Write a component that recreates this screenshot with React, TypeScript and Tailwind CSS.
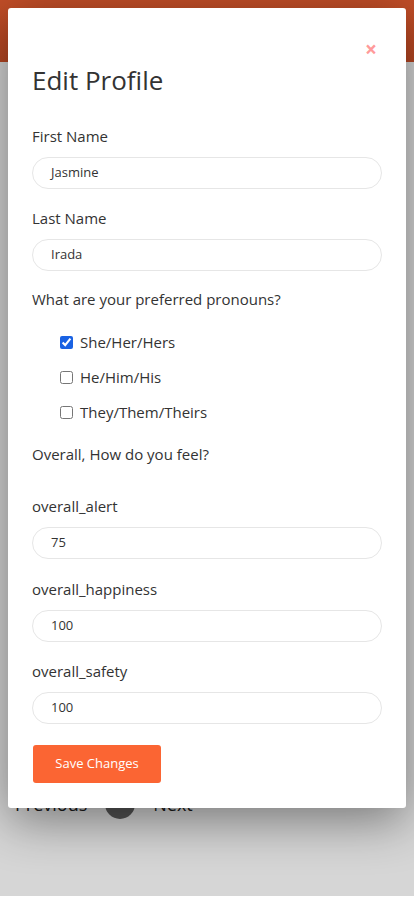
import React from "react";

const font = { fontFamily: '"Open Sans", "Noto Sans", sans-serif' };

function Field({ label, value }: { label: string; value: string }) {
  return (
    <div className="flex flex-col">
      <label className="text-[15px] leading-[22px] text-[#333]">{label}</label>
      <div className="mt-[10px] h-[32px] rounded-full border border-[#e6e6e6] bg-white flex items-center pl-[18px] text-[13px] text-[#333]">
        {value}
      </div>
    </div>
  );
}

function Check({ label, checked }: { label: string; checked?: boolean }) {
  return (
    <div className="flex items-center h-[22px] pl-[28px]">
      <input
        type="checkbox"
        defaultChecked={checked}
        className="w-[13px] h-[13px] accent-[#1a62e3]"
      />
      <span className="ml-[7px] text-[15px] text-[#333]">{label}</span>
    </div>
  );
}

export default function App() {
  return (
    <div className="relative h-[896px] bg-white overflow-hidden" style={font}>
      {/* page behind */}
      <div className="h-[62px] bg-gradient-to-b from-[#e85e30] to-[#dc552a]" />
      <div className="flex items-center gap-[18px] pl-[15px] mt-[727px] text-[18px] text-[#222]">
        <span>Previous</span>
        <span className="w-[30px] h-[30px] rounded-full bg-[#666]" />
        <span>Next</span>
      </div>

      {/* overlay */}
      <div className="absolute inset-0 bg-black/[0.16]" />

      {/* modal */}
      <div className="absolute left-[8px] top-[8px] w-[398px] h-[800px] bg-white rounded-[3px] shadow-[0_12px_50px_rgba(0,0,0,0.45)] px-6 pt-[30px]">
        <div className="flex justify-end h-[22px] items-center pr-[5px]">
          <span className="text-[#ff9a9a] text-[21px] font-bold leading-none">×</span>
        </div>
        <h1 className="mt-[5px] text-[26px] leading-[31px] text-[#333] font-normal">Edit Profile</h1>

        <div className="mt-[29px]">
          <Field label="First Name" value="Jasmine" />
        </div>
        <div className="mt-[18px]">
          <Field label="Last Name" value="Irada" />
        </div>

        <div className="mt-[17px] text-[15px] leading-[22px] text-[#333]">
          What are your preferred pronouns?
        </div>
        <div className="mt-[21px] flex flex-col gap-[13px]">
          <Check label="She/Her/Hers" checked />
          <Check label="He/Him/His" />
          <Check label="They/Them/Theirs" />
        </div>

        <div className="mt-[20px] text-[15px] leading-[22px] text-[#333]">
          Overall, How do you feel?
        </div>

        <div className="mt-[30px]">
          <Field label="overall_alert" value="75" />
        </div>
        <div className="mt-[19px]">
          <Field label="overall_happiness" value="100" />
        </div>
        <div className="mt-[18px]">
          <Field label="overall_safety" value="100" />
        </div>

        <button className="mt-[21px] h-[38px] w-[128px] ml-[1px] rounded-[3px] bg-[#fb6533] text-white text-[13px]">
          Save Changes
        </button>
      </div>
    </div>
  );
}
